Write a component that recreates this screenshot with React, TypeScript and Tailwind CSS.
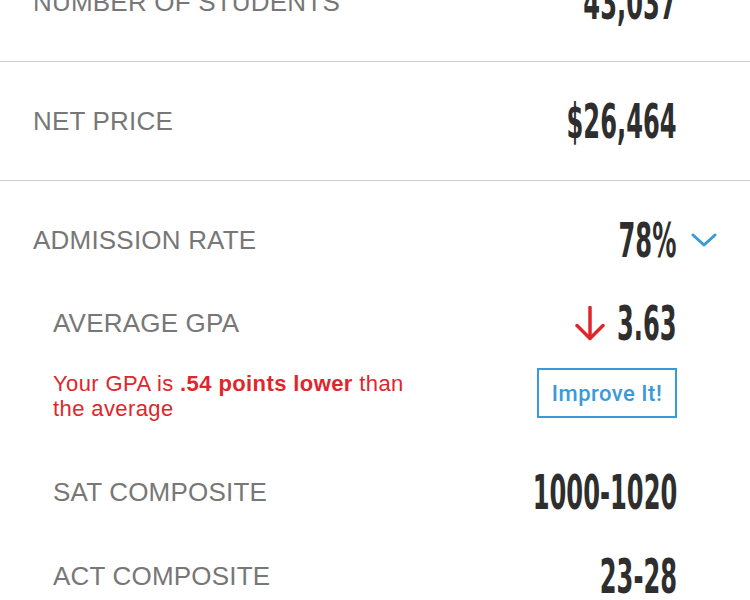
import React from 'react'

const Num = ({ children }: { children: React.ReactNode }) => (
  <span className="inline-block whitespace-nowrap origin-right scale-x-[0.56] font-['DejaVu_Sans_Condensed','DejaVu_Sans',sans-serif] font-bold text-[48px] leading-none text-[#2e2e2e]">
    {children}
  </span>
)

const Label = ({ children }: { children: React.ReactNode }) => (
  <span className="text-[26px] leading-none text-[#777777] tracking-[0.2px]">{children}</span>
)

const StatRow = ({ label, value, h }: { label: string; value: string; h: string }) => (
  <div className={`flex items-center justify-between pl-[33px] pr-[73px] border-b border-[#cfcfcf] ${h}`}>
    <Label>{label}</Label>
    <Num>{value}</Num>
  </div>
)

const SubRow = ({ label, value }: { label: string; value: string }) => (
  <div className="flex items-center justify-between h-[84px]">
    <Label>{label}</Label>
    <Num>{value}</Num>
  </div>
)

export default function App() {
  return (
    <div className="w-[750px] h-[600px] overflow-hidden bg-white font-['Liberation_Sans',Arial,sans-serif]">
      <div className="-mt-[57px]">
        <StatRow label="NUMBER OF STUDENTS" value="43,037" h="h-[119px]" />
        <StatRow label="NET PRICE" value="$26,464" h="h-[119px]" />

        <div className="flex items-center justify-between h-[118px] pl-[33px] pr-[33px]">
          <Label>ADMISSION RATE</Label>
          <div className="flex items-center gap-[15px]">
            <Num>78%</Num>
            <svg width="26" height="14" viewBox="0 0 26 14" fill="none">
              <polyline points="2,2 13,12 24,2" stroke="#3a9ad9" strokeWidth="3" strokeLinecap="round" strokeLinejoin="round" />
            </svg>
          </div>
        </div>

        <div className="pl-[53px] pr-[73px]">
          <div className="flex items-center justify-between h-[48px]">
            <Label>AVERAGE GPA</Label>
            <div className="flex items-center gap-[13px]">
              <svg width="30" height="35" viewBox="0 0 30 35" fill="none">
                <path d="M15 1.5V32" stroke="#e0262b" strokeWidth="3.5" strokeLinecap="round" />
                <path d="M2 19.5L15 32.5L28 19.5" stroke="#e0262b" strokeWidth="3.5" strokeLinecap="round" strokeLinejoin="round" />
              </svg>
              <span className="flex justify-end w-[59px]">
                <Num>3.63</Num>
              </span>
            </div>
          </div>

          <div className="flex items-start justify-between h-[103px] pt-[21px]">
            <p className="w-[370px] pt-[3px] text-[22px] leading-[25px] tracking-[0.4px] text-[#e0262b]">
              Your GPA is <strong className="font-bold">.54 points lower</strong> than the average
            </p>
            <button className="w-[140px] h-[50px] border-2 border-[#3a9ad9] text-[#3a9ad9] text-[22px] tracking-[0.5px] font-['Roboto',sans-serif] font-medium">
              Improve It!
            </button>
          </div>

          <SubRow label="SAT COMPOSITE" value="1000-1020" />
          <SubRow label="ACT COMPOSITE" value="23-28" />
        </div>
      </div>
    </div>
  )
}
